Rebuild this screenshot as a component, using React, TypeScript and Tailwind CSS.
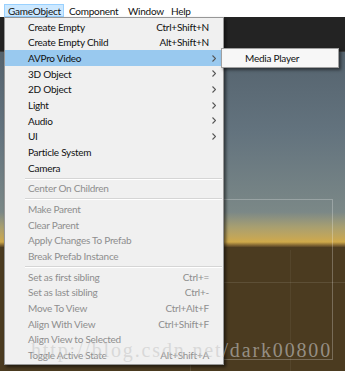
type Entry =
  | { sep: true }
  | { sep?: false; label: string; shortcut?: string; arrow?: boolean; disabled?: boolean; active?: boolean }

const entries: Entry[] = [
  { label: "Create Empty", shortcut: "Ctrl+Shift+N" },
  { label: "Create Empty Child", shortcut: "Alt+Shift+N" },
  { label: "AVPro Video", arrow: true, active: true },
  { label: "3D Object", arrow: true },
  { label: "2D Object", arrow: true },
  { label: "Light", arrow: true },
  { label: "Audio", arrow: true },
  { label: "UI", arrow: true },
  { label: "Particle System" },
  { label: "Camera" },
  { sep: true },
  { label: "Center On Children", disabled: true },
  { sep: true },
  { label: "Make Parent", disabled: true },
  { label: "Clear Parent", disabled: true },
  { label: "Apply Changes To Prefab", disabled: true },
  { label: "Break Prefab Instance", disabled: true },
  { sep: true },
  { label: "Set as first sibling", shortcut: "Ctrl+=", disabled: true },
  { label: "Set as last sibling", shortcut: "Ctrl+-", disabled: true },
  { label: "Move To View", shortcut: "Ctrl+Alt+F", disabled: true },
  { label: "Align With View", shortcut: "Ctrl+Shift+F", disabled: true },
  { label: "Align View to Selected", disabled: true },
  { label: "Toggle Active State", shortcut: "Alt+Shift+A", disabled: true },
]

function Chevron() {
  return (
    <svg width="4" height="7" viewBox="0 0 4 7" className="ml-auto">
      <polyline points="0.5,0.5 3.5,3.5 0.5,6.5" fill="none" stroke="#555" strokeWidth="1.1" />
    </svg>
  )
}

export default function App() {
  return (
    <div
      className="relative w-[345px] h-[371px] overflow-hidden flex flex-col bg-[#4a3a20] text-[10px] leading-none tracking-[-0.25px]"
      style={{ fontFamily: "Lato, 'Liberation Sans', sans-serif" }}
    >
      {/* menu bar */}
      <div className="h-[17px] shrink-0 bg-white flex pl-[4px] text-[#111]">
        <div className="w-[60px] h-[13px] mt-[4px] border border-[#99d1ff] bg-[#cce8ff] flex items-center pl-[3px]">
          GameObject
        </div>
        <div className="w-[59px] h-[13px] mt-[4px] flex items-center pl-[5px]">Component</div>
        <div className="w-[43px] h-[13px] mt-[4px] flex items-center pl-[5px]">Window</div>
        <div className="h-[13px] mt-[4px] flex items-center pl-[5px]">Help</div>
      </div>

      {/* scene view behind */}
      <div className="h-[35px] shrink-0 bg-[#232323] border-b border-[#3c3c3c]" />
      <div className="flex-1 flex flex-col">
        <div className="h-[160px] bg-gradient-to-b from-[#55636e] via-[#63737e] to-[#7b8887]" />
        <div className="h-[30px] bg-gradient-to-b from-[#7b8887] via-[#a89f70] to-[#cfa94a]" />
        <div className="h-[5px] bg-gradient-to-b from-[#cfa94a] to-[#5a4526]" />
        <div className="flex-1 bg-[#4b3b20]" />
      </div>

      {/* scene grid / frame lines */}
      <div className="absolute left-[224px] top-[199px] w-[109px] h-[161px] border-t border-r border-b border-white/25" />
      <div className="absolute left-[224px] top-[282px] w-[121px] h-px bg-white/10" />
      <div className="absolute left-[190px] top-[250px] w-px h-[121px] bg-white/10" />
      <div className="absolute left-[290px] top-[250px] w-px h-[121px] bg-white/5" />

      {/* dropdown menu */}
      <div className="absolute left-[4px] top-[17px] w-[220px] border border-[#979797] bg-[#f0f0f0] pt-px pb-px shadow-[2px_2px_3px_rgba(0,0,0,0.55)]">
        {entries.map((e, i) =>
          e.sep ? (
            <div key={i} className="h-[5px] pt-[2px] pl-[20px] pr-px">
              <div className="border-t border-b border-t-[#d5d5d5] border-b-white" />
            </div>
          ) : (
            <div
              key={i}
              className={
                "h-[15.67px] flex items-center pl-[23px] pr-[7px] " +
                (e.active ? "bg-[#99c9ef] " : "") +
                (e.disabled ? "text-[#8e8e8e]" : "text-[#111]")
              }
            >
              <span className="flex-1">{e.label}</span>
              {e.shortcut && <span>{e.shortcut}</span>}
              <span className="w-[7px] flex">{e.arrow && <Chevron />}</span>
            </div>
          )
        )}
      </div>

      {/* submenu */}
      <div className="absolute left-[221px] top-[48px] w-[118px] h-[20px] border border-[#a0a0a0] bg-[#f7f7f7] flex items-center pl-[23px] text-[#111] shadow-[2px_2px_3px_rgba(0,0,0,0.5)]">
        Media Player
      </div>

      {/* watermark */}
      <div
        className="absolute left-[31px] top-[340px] text-[20px] leading-none tracking-[1.85px] whitespace-nowrap text-[rgba(200,200,200,0.6)] pointer-events-none"
        style={{ fontFamily: "'Liberation Serif', serif" }}
      >
        http://blog.csdn.net/dark00800
      </div>
    </div>
  )
}
